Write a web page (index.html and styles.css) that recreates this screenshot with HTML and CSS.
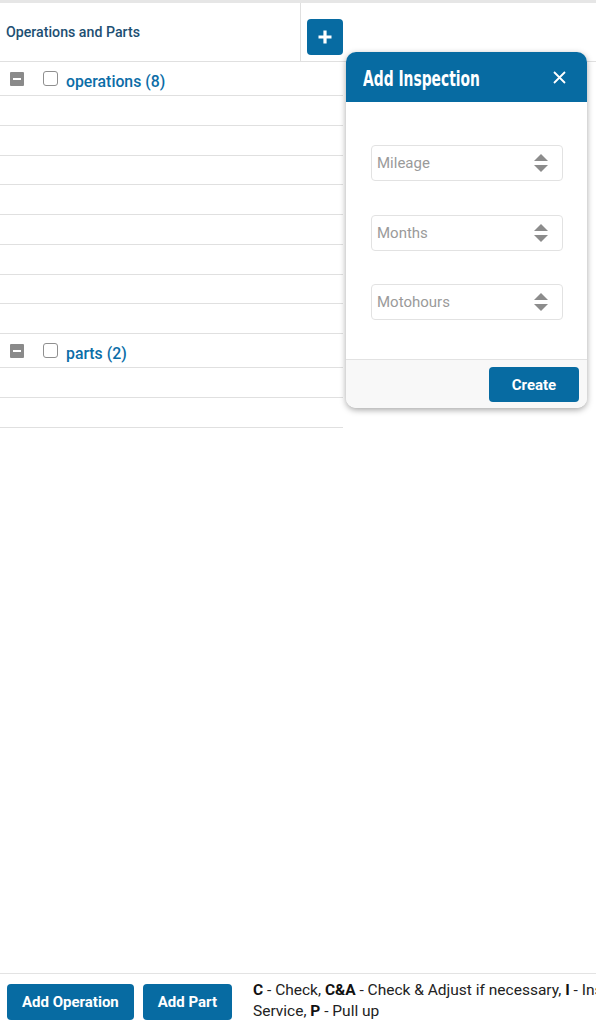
FILE: index.html
```html
<!DOCTYPE html>
<html lang="en">
<head>
<meta charset="utf-8">
<title>Operations and Parts</title>
<link rel="stylesheet" href="styles.css">
</head>
<body>
<div class="page">
  <div class="topbar"></div>
  <div class="grid-header">
    <div class="hcell hcell-title">Operations and Parts</div>
    <div class="hcell hcell-actions">
      <button class="btn-plus" aria-label="Add">
        <svg width="16" height="16" viewBox="0 0 16 16"><path d="M8 1.5v13M1.5 8h13" stroke="#fff" stroke-width="3.2" stroke-linecap="butt"/></svg>
      </button>
    </div>
  </div>

  <div class="grid-body">
    <div class="group-row">
      <span class="collapse-icon"></span>
      <span class="checkbox"></span>
      <span class="group-label">operations (8)</span>
    </div>
    <div class="row"></div>
    <div class="row"></div>
    <div class="row"></div>
    <div class="row"></div>
    <div class="row"></div>
    <div class="row"></div>
    <div class="row"></div>
    <div class="row"></div>
    <div class="group-row">
      <span class="collapse-icon"></span>
      <span class="checkbox"></span>
      <span class="group-label">parts (2)</span>
    </div>
    <div class="row"></div>
    <div class="row"></div>
  </div>

  <div class="spacer"></div>

  <div class="footer">
    <button class="btn">Add Operation</button>
    <button class="btn">Add Part</button>
    <div class="legend"><b>C</b> - Check, <b>C&amp;A</b> - Check &amp; Adjust if necessary, <b>I</b> - Inspect, <b>R</b> - Replace, <b>S</b>&nbsp;- Service, <b>P</b> - Pull up</div>
  </div>

  <div class="popup">
    <div class="popup-head">
      <span class="popup-title">Add Inspection</span>
      <svg class="popup-close" width="13" height="13" viewBox="0 0 13 13"><path d="M1 1l11 11M12 1L1 12" stroke="#fff" stroke-width="1.8"/></svg>
    </div>
    <div class="popup-body">
      <div class="numeric"><span class="ph">Mileage</span><span class="spin"><i class="up"></i><i class="down"></i></span></div>
      <div class="numeric"><span class="ph">Months</span><span class="spin"><i class="up"></i><i class="down"></i></span></div>
      <div class="numeric"><span class="ph">Motohours</span><span class="spin"><i class="up"></i><i class="down"></i></span></div>
    </div>
    <div class="popup-foot">
      <button class="btn btn-create">Create</button>
    </div>
  </div>
</div>
</body>
</html>
```

FILE: styles.css
```css
*, *::before, *::after {
  box-sizing: border-box;
}

html, body {
  margin: 0;
  padding: 0;
  overflow: hidden;
  background: #fff;
  font-family: Roboto, "Liberation Sans", sans-serif;
}

.page {
  position: relative;
  height: 1024px;
  display: flex;
  flex-direction: column;
}

.topbar {
  height: 3px;
  background: #e6e6e6;
}

.grid-header {
  display: flex;
  height: 59px;
  border-bottom: 1px solid #e0e0e0;
}

.hcell-title {
  width: 301px;
  padding-left: 6px;
  border-right: 1px solid #e0e0e0;
  display: flex;
  align-items: center;
  font-size: 14.2px;
  font-weight: 500;
  color: #1d4f72;
}

.hcell-actions {
  padding: 16px 0 0 6px;
}

.btn-plus {
  width: 36px;
  height: 36px;
  border: none;
  border-radius: 4px;
  background: #076ba2;
  display: flex;
  align-items: center;
  justify-content: center;
  padding: 0;
}

.grid-body {
  width: 343px;
}

.group-row {
  height: 34px;
  border-bottom: 1px solid #e0e0e0;
  display: flex;
  align-items: center;
}

.collapse-icon {
  width: 14px;
  height: 14px;
  margin-left: 10px;
  background: #8a8a8a;
  border-radius: 1px;
  position: relative;
}
.collapse-icon::after {
  content: "";
  position: absolute;
  left: 3px;
  top: 6px;
  width: 8px;
  height: 2px;
  background: #fff;
}

.checkbox {
  width: 15px;
  height: 15px;
  margin-left: 19px;
  border: 1px solid #8f8f8f;
  border-radius: 3px;
  background: #fff;
}

.group-label {
  margin-left: 8px;
  margin-top: 5px;
  font-size: 15.8px;
  font-weight: 500;
  color: #0b6da7;
}

.row {
  height: 29.75px;
  border-bottom: 1px solid #e0e0e0;
}

.spacer {
  flex: 1;
}

.footer {
  border-top: 1px solid #e3e3e3;
  height: 51px;
  display: flex;
  align-items: flex-start;
  padding: 10px 0 0 7px;
  white-space: nowrap;
}

.btn {
  height: 36px;
  border: none;
  border-radius: 4px;
  background: #076ba2;
  color: #fff;
  font-family: Roboto, "Liberation Sans", sans-serif;
  font-size: 15px;
  font-weight: 700;
  padding: 0 15px;
  margin-right: 9px;
  flex-shrink: 0;
}

.legend {
  margin-left: 12px;
  margin-top: -4px;
  width: 500px;
  white-space: normal;
  flex-shrink: 0;
  font-size: 15.5px;
  line-height: 21px;
  color: #222;
}
.legend b {
  font-weight: 700;
  color: #111;
}

.popup {
  position: absolute;
  left: 346px;
  top: 52px;
  width: 241px;
  height: 356px;
  border-radius: 10px;
  background: #fff;
  box-shadow: 0 2px 6px rgba(0,0,0,0.35);
  overflow: hidden;
  display: flex;
  flex-direction: column;
}

.popup-head {
  height: 50px;
  flex-shrink: 0;
  background: #076ba2;
  display: flex;
  align-items: center;
  justify-content: space-between;
  padding: 0 21px 0 17px;
}

.popup-title {
  display: inline-block;
  width: 116px;
  white-space: nowrap;
  font-family: "DejaVu Sans", sans-serif;
  font-weight: 700;
  font-size: 22px;
  color: #fff;
  transform: scaleX(0.63);
  transform-origin: left center;
  margin-top: 2px;
}

.popup-body {
  flex: 1;
  padding: 43px 24px 0 25px;
  display: flex;
  flex-direction: column;
  gap: 33.5px;
}

.numeric {
  height: 36px;
  flex-shrink: 0;
  border: 1px solid #e2e2e2;
  border-radius: 4px;
  display: flex;
  align-items: center;
  justify-content: space-between;
  padding: 0 14px 0 5px;
}

.ph {
  font-size: 15px;
  color: #9a9a9a;
}

.spin {
  display: flex;
  flex-direction: column;
  gap: 4px;
}
.spin i {
  width: 0;
  height: 0;
  border-left: 7px solid transparent;
  border-right: 7px solid transparent;
}
.spin .up {
  border-bottom: 7px solid #8c8c8c;
}
.spin .down {
  border-top: 7px solid #8c8c8c;
}

.popup-foot {
  height: 49px;
  flex-shrink: 0;
  border-top: 1px solid #e2e2e2;
  background: #f8f8f8;
  display: flex;
  align-items: flex-start;
  justify-content: flex-end;
  padding: 7px 8px 0 0;
}

.btn-create {
  width: 90px;
  height: 35px;
  margin: 0;
  padding: 0;
}
```
